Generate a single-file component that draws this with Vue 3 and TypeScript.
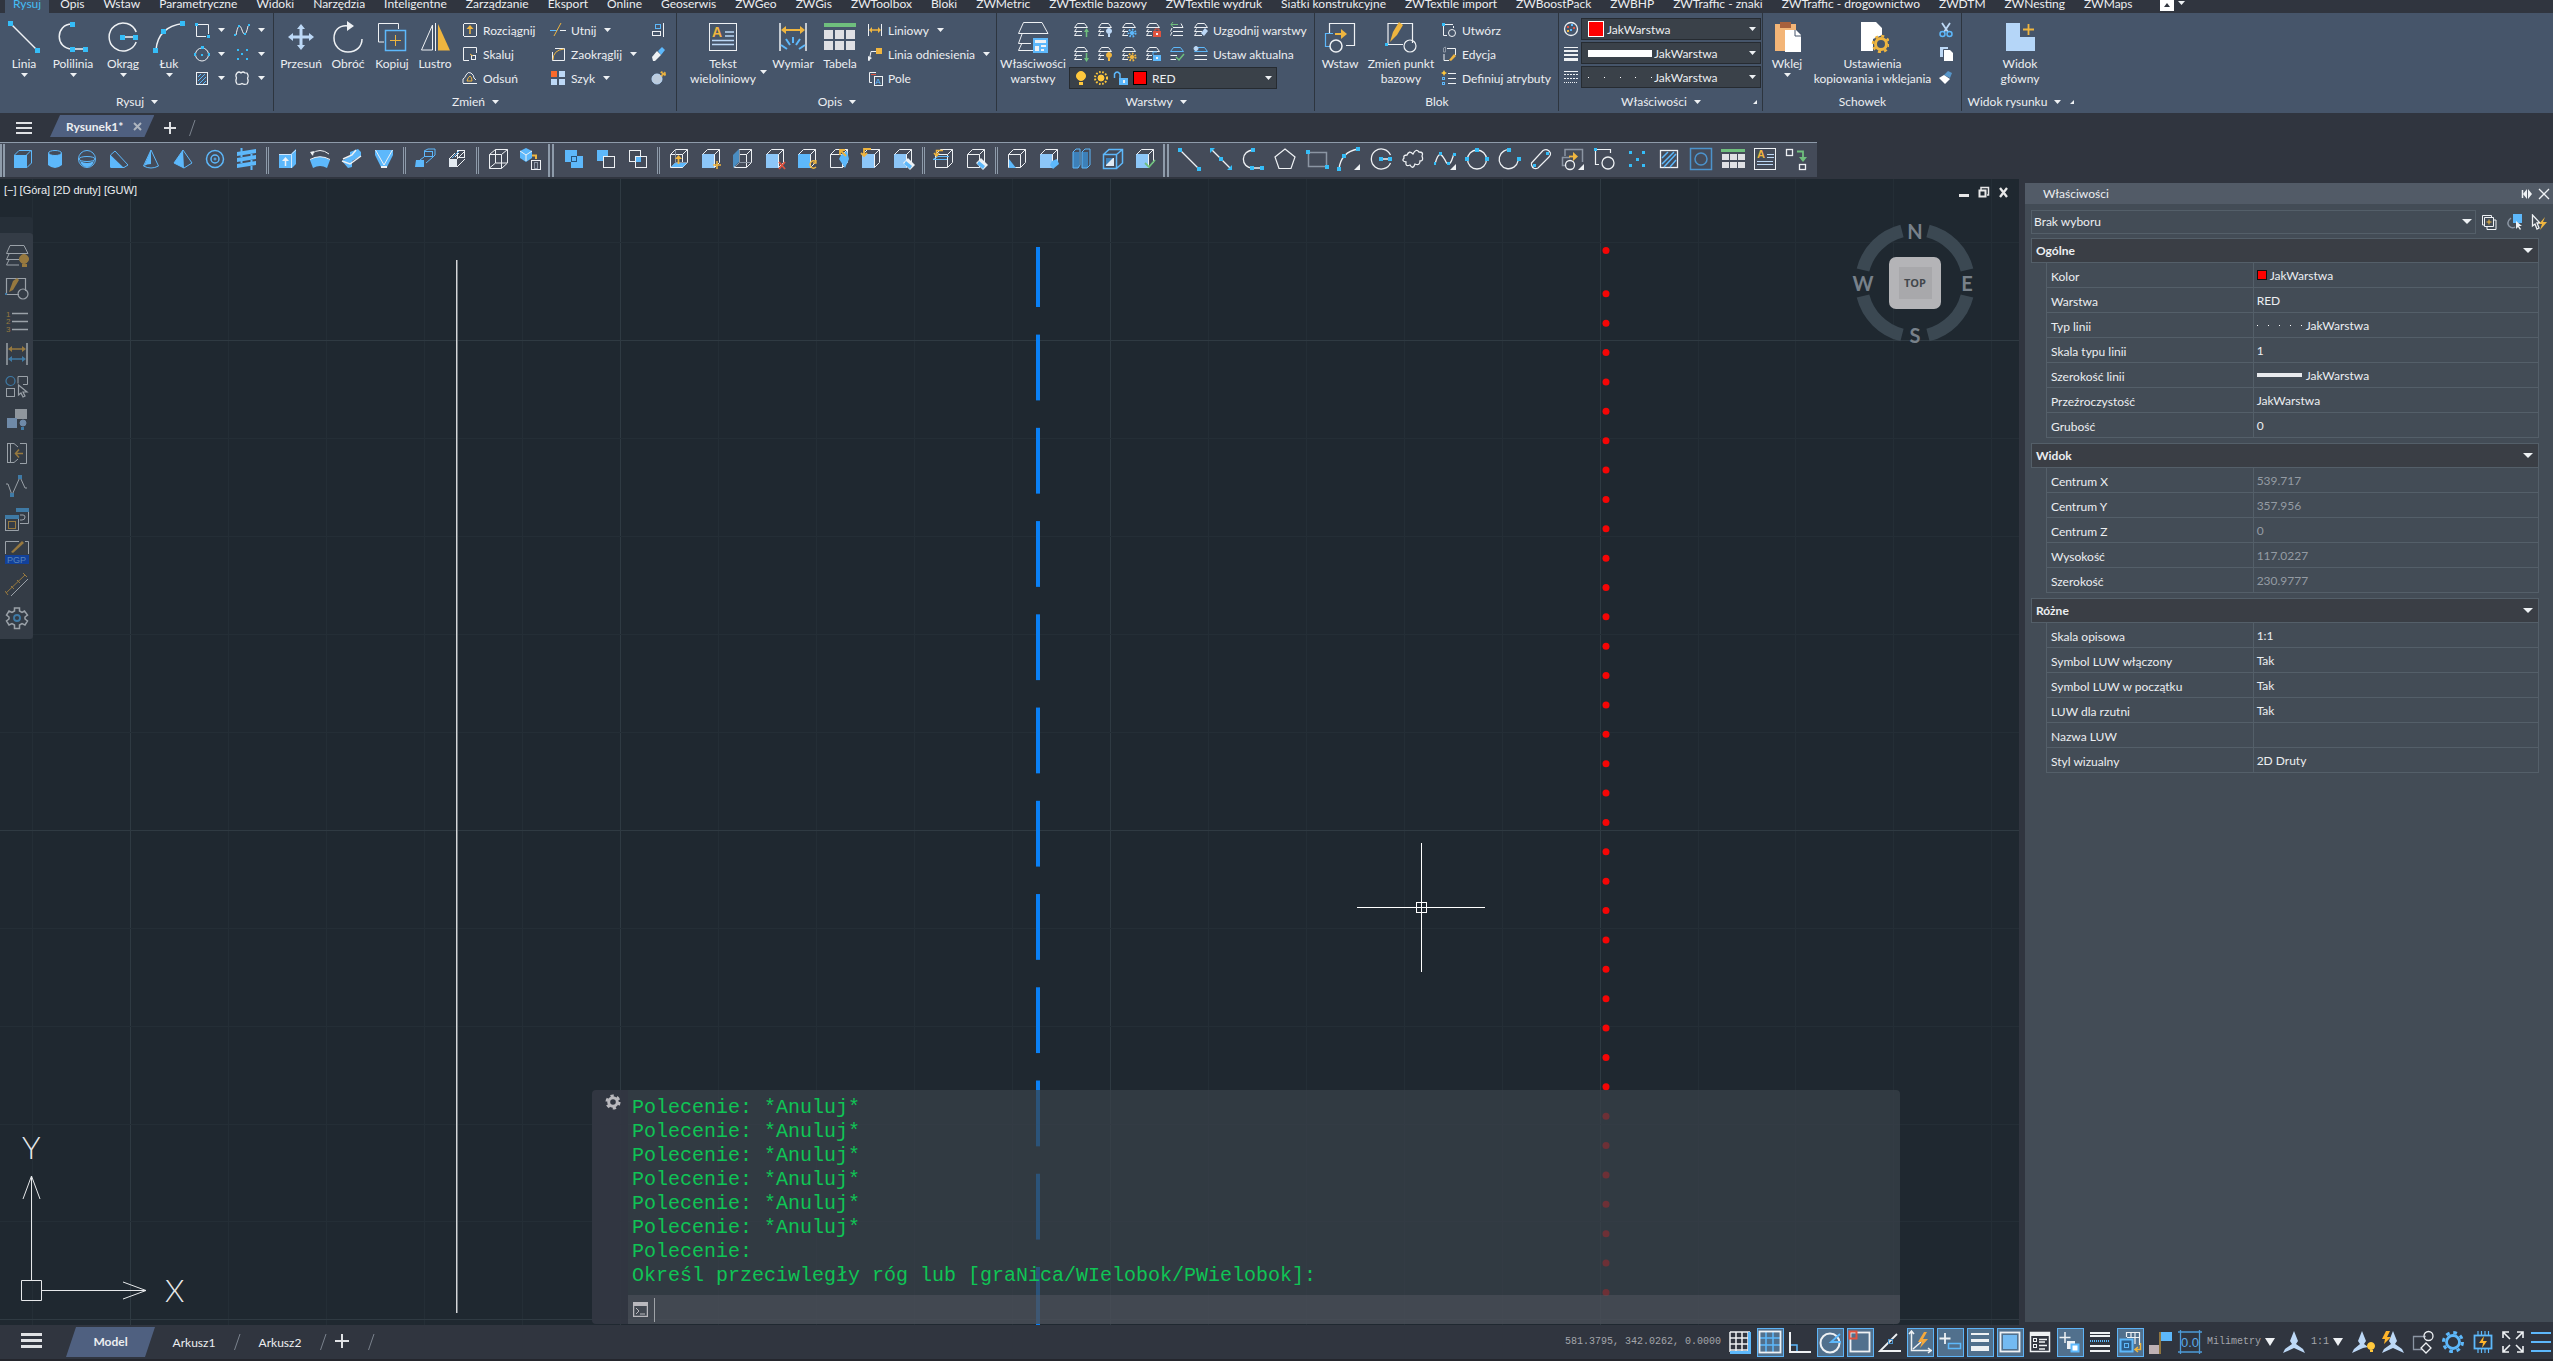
<script setup lang="ts">
import { h } from 'vue'

const W = '#eef1f4'
const B = '#5db8fb'
const C = '#35bdf8'
const Y = '#efb53f'
const L = '#bcd8f6'
const G = '#8b95a3'
const R = '#e0533f'
const N = '#6fbf7d'
const S = '#9aa1a8'
const O = '#97793f'
const D = '#3f7aa5'

const p = (d: string, c = W, w = 1, f = 'none') =>
  `<path d="${d}" stroke="${c}" stroke-width="${w}" fill="${f}"/>`
const f = (d: string, c = W) => `<path d="${d}" fill="${c}"/>`
const r = (x: number, y: number, w: number, hh: number, c = C) =>
  `<rect x="${x}" y="${y}" width="${w}" height="${hh}" fill="${c}"/>`
const o = (x: number, y: number, w: number, hh: number, c = W, s = 1, fill = 'none') =>
  `<rect x="${x + 0.5}" y="${y + 0.5}" width="${w - 1}" height="${hh - 1}" stroke="${c}" stroke-width="${s}" fill="${fill}"/>`
const c = (x: number, y: number, q: number, s = W, w = 1, fill = 'none') =>
  `<circle cx="${x}" cy="${y}" r="${q}" stroke="${s}" stroke-width="${w}" fill="${fill}"/>`
const t = (x: number, y: number, z: number, s: string, col: string, wt = 400) =>
  `<text x="${x}" y="${y}" font-size="${z}" font-weight="${wt}" font-family="Liberation Sans, sans-serif" fill="${col}">${s}</text>`

const bulb = (x: number, y: number, col: string) =>
  c(x, y, 2.5, col, 1, col) + r(x - 1, y + 3, 2, 3, col)
const sun = (x: number, y: number, q: number, col: string) =>
  c(x, y, q * 0.5, col, 1, col) + `<circle cx="${x}" cy="${y}" r="${q}" stroke="${col}" stroke-width="2" fill="none" stroke-dasharray="1.6 1.6"/>`
const stack = (col = W) => p('M4.5 1.5 H11.5 L14.5 5.5 H1.5 Z M3.5 6.5 L1.5 9.5 H9 M3.5 10.5 L1.5 13.5 H9', col)
const cap = p('M1.5 5.5 L4.5 1.5 H11.5 L14.5 5.5 Z M3.5 7 L1.5 9.5 H7 M3.5 10.5 L1.5 13.5 H7')
const wire = (x = 0, y = 0) =>
  p(`M${3.5 + x} ${7.5 + y} H${15.5 + x} V${20.5 + y} H${3.5 + x} Z M${3.5 + x} ${7.5 + y} L${8.5 + x} ${2.5 + y} H${20.5 + x} V${15.5 + y} L${15.5 + x} ${20.5 + y} M${15.5 + x} ${7.5 + y} L${20.5 + x} ${2.5 + y}`)
const inner = p('M8.5 3 V15.5 H20 M8.5 15.5 L4 20', G)
const solid = (col = '#8cc6f8') => r(3, 7, 13, 14, col) + p('M3.5 7.5 L8.5 2.5 H20.5 V15.5 L15.5 20.5 M15.5 7.5 L20.5 2.5 M15.5 7.5 V20')
const diamond = f('M17 11 L24 18 L19 23 L12 16 Z', W) + f('M15 14 L21 19 L19 22 L13 17 Z', B)

const icons: Record<string, string> = {
  slash: p('M1.5 17 L7 1', '#7a828d'),
  menu: r(0, 1, 16, 2, '#e0e2e5') + r(0, 6, 16, 2, '#e0e2e5') + r(0, 11, 16, 2, '#e0e2e5'),
  plus: p('M6 0 V12 M0 6 H12', '#e0e2e5', 2),
  down: f('M0 0 H7 L3.5 4 Z'),
  wide: f('M0 0 H10 L5 5 Z'),
  tall: f('M0 0 H10 L5 8 Z'),
  corner: f('M0 4 L4 0 V4 Z'),
  close: p('M1 1 L8 8 M8 1 L1 8', '#aeb5bf', 2),
  // large ribbon
  line: p('M2 2 L29 29', W, 1.5) + r(0, 0, 5, 5) + r(27, 27, 5, 5),
  pline: p('M15 3 C-2 3 -2 28 15 28 H28', W, 1.5) + r(13, 1, 5, 5) + r(13, 26, 5, 5) + r(26, 26, 5, 5),
  circle: p('M29.2 11 A14 14 0 1 0 29.2 21 M16 16 H28', W, 1.5) + r(13, 14, 5, 5) + r(26, 14, 5, 5),
  arc: p('M3 29 C4 16 11 5 30 2.5', W, 1.5) + r(0, 27, 5, 5) + r(8, 8, 5, 5) + r(27, 0, 5, 5),
  move: f('M16 3 L20 8 H17.5 V14.5 H24 V12 L29 16 L24 20 V17.5 H17.5 V24 H20 L16 29 L12 24 H14.5 V17.5 H8 V20 L3 16 L8 12 V14.5 H14.5 V8 H12 Z', L),
  rotate: p('M17 5 C6 3 2 11 2 17 C2 25 8 31 16 31 C25 31 30 25 30 18', W, 1.5) + f('M15 0 L22 5 L15 10 Z'),
  copy: p('M8 21 H2.5 V2.5 H22.5 V8', W) + o(9, 9, 21, 21, B, 1.5) + p('M19.5 14 V25 M14 19.5 H25', Y),
  mirror: p('M13.5 4 V29 H2.5 Z', W) + p('M16.5 2 V30', W) + f('M19 3 L31 29.5 H19 Z', Y),
  mtext: o(2, 2, 28, 28) + t(5, 16, 14, 'A', Y, 700) + p('M18 11 H27 M18 15 H27 M5 19.5 H27 M5 23.5 H27', L, 1.5),
  dim: p('M3 2 V30 M29 2 V30', W, 1.5) + p('M6 9 H26', Y, 2) + f('M4 9 L9 5 V13 Z M28 9 L23 5 V13 Z', Y) + p('M16 16 V22 M9 18 L13 24 M23 18 L19 24 M4 24 L10 28 M28 24 L22 28', B, 2),
  table: r(0, 2, 32, 4, N) + [0, 1, 2].map(i => r(i * 11, 9, 9, 9, '#dfe0e4') + r(i * 11, 20, 9, 9, '#dfe0e4')).join(''),
  layers: p('M6.5 1.5 H25 L31 12.5 H1.5 Z M5 13 L1.5 22.5 H14 M5 22 L1.5 29.5 H16', W) + r(16, 17, 15, 15, B) + r(18, 19, 11, 3, W) + r(18, 25, 4, 5, W) + r(24, 24, 5, 2, W) + r(24, 28, 3, 2, W),
  insert: p('M5.5 12 V2.5 H30.5 V24.5 H22', W, 1.2) + p('M9 12.5 H1.5 V25.5 H6', B, 1.2) + p('M11 13 H20', Y, 2) + f('M17 8 L23 13 L17 18 Z', Y) + c(12, 25, 6, W, 1.5),
  basept: p('M3 23 V2.5 H27.5 V22 M3 23.5 H18', W, 1.2) + f('M5 21 L8 11 L14 1 L18 4 L12 14 Z', Y) + c(25, 25, 6, W, 1.2) + r(0, 22, 3, 3, C),
  paste: r(4, 3, 21, 27, '#f3b577') + r(9, 1, 11, 6, '#a8603c') + f('M14 9 H25 L30 14 V31 H14 Z', '#fff') + p('M24 9 V15 H30', '#46556a'),
  pasteset: f('M4 1 H19 L25 7 V14 L16 18 V30 H4 Z', '#fff') + c(24, 23, 5.5, Y, 3) + `<circle cx="24" cy="23" r="8" stroke="${Y}" stroke-width="2.5" fill="none" stroke-dasharray="3 3.28"/>`,
  mainview: f('M2 2 H16 V16 H31 V30 H2 Z', '#b5d6f8') + p('M24.5 3 V14 M19 8.5 H30', Y, 1.8),
  // small ribbon
  rect: p('M4 2.5 H14.5 V12 M2.5 4 V14.5 H12', W) + r(1, 1, 3, 3) + r(13, 13, 3, 3),
  spl: p('M2 13 C4 2 6 2 8 8 C10 14 12 14 14 4', W) + r(0, 12, 2, 2) + r(4, 3, 2, 2) + r(10, 11, 2, 2) + r(14, 2, 2, 2),
  circ2: c(8, 8.5, 6.5, W) + r(7, 0, 3, 3) + r(7, 8, 2, 2) + r(0, 7, 2, 3) + r(14, 7, 2, 3),
  dots: [[3, 3], [12, 3], [7, 7], [3, 12], [12, 12]].map(q => r(q[0], q[1], 2, 2)).join(''),
  hatch: o(2, 2, 12, 13, W) + p('M4 7 L7 4 M4 11 L11 4 M5 14 L12 7 M9 14 L12 11', B),
  revc: p('M3 3 Q5 1 7 3 Q9 1 11 3 L13 3 Q15 6 13.500 8 Q15 11 13 14 Q10 15 8 13.500 Q6 15 3 14 Q1 11 2.500 8 Q1 5 3 3', W, 1.2),
  stretch: p('M2 1.500 H14 M2 14.500 H14', W) + p('M1.500 2 V14 M14.500 2 V14', W) + p('M8 5 V12', Y, 1.5) + f('M4.500 7 L8 3 L11.500 7 Z', Y),
  scale: p('M1.500 1.500 H14.500 V7 M1.500 1.500 V14.500 H7', W) + o(9, 9, 5, 5, W) + p('M8 8 L11 10', Y),
  offset: p('M1 13.500 H15 M1 13 V9 Q3 8 4 5 Q6 1 9 3 Q12 5 12 8 L14 10', W) + p('M5 11 Q6 7 8 6 Q10 7 10 11 Z', Y),
  trim: p('M0 8.500 H7', B) + p('M10 8.500 H16', W) + p('M4 14 L11 1', Y),
  fillet: p('M5 2.500 H14.500 V14.500 H2.500 V6', W) + p('M3 14 Q3 4 14 3', Y),
  array: r(1, 1, 6, 6, '#fa6a2b') + r(9, 1, 6, 6, L) + r(1, 9, 6, 6, L) + r(9, 9, 6, 6, L),
  align: p('M13.500 1 V15', W) + o(5, 2, 6, 5, B) + o(2, 9, 9, 5, W),
  erase: f('M8 5 L12 1 L15 4 L11 9 Z', B) + f('M2 11 L7 5 L11 9 L5 15 H3 Z', W),
  explode: c(7, 9, 5, L, 1, '#bccbdc') + sun(13, 4, 2, Y),
  dimlin: p('M1.500 2 V14 M14.500 2 V14', W) + p('M3 8 H13', Y, 1.5) + f('M2 8 L5 5 V11 Z M14 8 L11 5 V11 Z', Y),
  leader: p('M2 15 L4 5.500 H9', W) + f('M1 15 L1 10 L5 12 Z') + r(9, 2, 6, 6, Y),
  field: p('M9 2.500 H2.500 V12.500 H5', W) + p('M4 4.500 H9', R) + o(7, 6, 9, 10, W) + t(8.5, 14, 8, 'A', B),
  lyUp: stack() + p('M13.500 8 V15', N, 1.5) + f('M11 10 L13.500 6 L16 10 Z', N),
  lyDn: stack() + p('M13.500 7 V14', N, 1.5) + f('M11 12 L13.500 16 L16 12 Z', N),
  lyOff: cap + bulb(12, 9, L),
  lyOn: cap + bulb(12, 9, Y),
  lyFrz: cap + sun(11, 11, 3.5, B),
  lyThw: cap + sun(11, 11, 3.5, Y),
  lyLock: cap + r(8, 9, 8, 6, R) + p('M10 9 V7 H14 V9', R) + r(11, 11, 2, 2, W),
  lyUnl: cap + r(8, 9, 8, 6, B) + p('M8 9 V6 H12', B) + r(11, 11, 2, 2, W),
  lyPrev: p('M4 5.500 H14 L12 1.500 M4 9.500 H14 M4 13.500 H14 M3 6 L1.500 9.500 M3 10 L1.500 13.500', W) + p('M2 2.500 H9 M4 0 L2 2.500 L4 5', N),
  lyCur: p('M1.500 5.500 L4.500 1.500 H11.500 L14.500 5.500 Z', B) + p('M1.500 9.500 H8 M1.500 13.500 H7', W) + p('M7 11 L10 14 L15 8', N, 1.5),
  lyMat: stack() + f('M12 6 L15 9 L11 14 L8 11 Z', L),
  lySet: p('M1.500 5.500 L4.500 1.500 H11.500 L14.500 5.500 Z', B) + p('M1.500 9.500 H14 M1.500 13.500 H14', W) + c(3, 2.5, 2, L, 1, L),
  bulbY: c(8, 6, 4.5, '#ffc83d', 1, '#ffc83d') + r(6, 12, 4, 3, '#ffc83d'),
  sunY: sun(8, 8, 6, '#ffc83d'),
  unlock: r(6, 8, 9, 7, B) + p('M7 8 V4 Q4 0 1.500 4 V8', B, 1.5) + r(10, 10, 2, 3, W),
  mk: p('M4 2.500 H12 M2.500 4 V13.500 H6 M12.500 4 V6', W) + r(1, 1, 3, 3) + c(11, 11, 3.5),
  edit: p('M6 2.500 H14.500 V9 M3 8 V14.500 H8', W) + p('M2.500 2 V6 H4.500 V1 Z', G) + f('M8 14 L13 8 L15 10 L10 15 Z', Y),
  attr: p('M7 3.500 H15 M7 8.500 H15 M7 13.500 H15', W) + o(1, 7, 3, 3, B) + o(1, 12, 3, 3, B) + f('M3 0 L4 2 L6 3 L4 4 L3 6 L2 4 L0 3 L2 2 Z', '#ffc83d'),
  palette: c(8, 8, 6.5, W, 1.3) + r(4, 5, 2, 2, R) + r(8, 3, 2, 2, B) + r(10, 6, 2, 2, R) + r(7, 8, 2, 2, B) + r(4, 9, 2, 2, Y),
  weight: r(1, 2, 14, 1, W) + r(1, 5, 14, 2, W) + r(1, 9, 14, 2, W) + r(1, 13, 14, 3, W),
  ltype: p('M1 2.500 H15', W) + `<path d="M1 5.500 H15 M1 9.500 H15" stroke="${W}" stroke-dasharray="2 1"/><path d="M1 13.500 H15" stroke="${W}" stroke-dasharray="1 1"/>`,
  cut: p('M4 1 L10 10 M12 1 L6 10', L, 1.8) + c(4.5, 12, 2.5, B, 1.5) + c(11.5, 12, 2.5, B, 1.5),
  copyc: r(2, 1, 8, 10, L) + f('M6 4 H12 L15 7 V15 H6 Z', '#fff') + p('M5.500 12 V3.500 H11', '#46556a'),
  match: f('M6 5 L10 1 L14 3 L12 8 Z', '#5796c9') + f('M1 8 L6 5 L12 9 L7 14 Z', '#fff'),
  // 3D toolbar
  box: r(3, 8, 13, 13, B) + p('M3.500 8 L8 3.500 H20.500 V16 L16 20.500 M15.500 8 L20 3.500', B),
  cyl: f('M5 6 V18 Q12 24 19 18 V6 Z', B) + `<ellipse cx="12" cy="6" rx="6.500" ry="2.500" fill="#444b59" stroke="${B}"/>`,
  sph: c(12, 12, 8.5, B) + `<ellipse cx="12" cy="12" rx="8" ry="2.500" stroke="${B}" fill="none"/>` + f('M5 14 Q12 18 19 14 Q17 20 12 20 Q7 20 5 14 Z', B),
  wedge: p('M3.500 20 V8 L8 4 L21 18 L17 20.500 Z', B) + f('M3.500 8 L17 21 H3.500 Z', B),
  cone: p('M12 3 L4.500 19 Q12 23 19.500 19 Z', B) + f('M12 3 L5 19 Q8 17 12 17 Z', B),
  pyr: p('M12 3 L3 16 L13 21 L21 16 Z', B) + f('M12 3 L3 16 L13 21 Z', B),
  torus: c(12, 12, 8.5, B, 1.5) + c(12, 12, 4, B, 1.5) + c(12, 12, 1, B),
  helix: [2, 8, 14].map(q => f(`M2 ${q + 3} L21 ${q} V${q + 4} L2 ${q + 7} Z`, B)).join('') + p('M6.500 1 V5 M6.500 8 V10 M6.500 14 V16 M16.500 7 V9 M16.500 13 V15 M16.500 19 V23', B, 2),
  extr: f('M3 7 H15 L20 2 V17 L16 21 H3 Z', B) + p('M3 7.500 H15.500 V21 M15.500 7 L20 3', '#cfe6fb') + p('M9.500 12 V19', W, 1.5) + f('M6 14 L9.500 10 L13 14 Z'),
  revo: p('M3 7 Q12 0 21 7', W) + f('M2 5 L6 4 L5 9 Z') + f('M2 13 Q12 6 22 13 L19 21 Q12 17 5 21 Z', B) + p('M2 12.500 Q12 7 22 12.500', W),
  sweep: f('M2 14 L10 9 V5 L18 2 L21 5 V9 L12 14 V20 L8 21 Z', B) + p('M2 14 L10 17 L21 9 M3 12 L12 8 L16 3', W, 1.5),
  loft: f('M3 3 H21 V8 L15 20 H9 L3 8 Z', B) + p('M3.500 3 L12 18 L20.500 3', W) + p('M9 20 H15', W, 2),
  pol1: o(11, 4, 9, 6, B) + f('M3 13 H11 V20 H2 Z', B) + p('M11 10 L7 13 M20 10 L13 16 M11 4 L15 2 H22 V8 L20 10', B),
  pol2: o(12, 3, 8, 8, W) + r(4, 12, 8, 8, '#e4ebf2') + p('M4 12 L10 6 M12 12 L20 4 M12 20 L20 12 M10 10 L14 6', W) + p('M7 11 L14 4', B),
  cube: p('M3.500 7.500 H15.500 V21.500 H3.500 Z M3.500 7.500 L9.500 2.500 H21.500 V16 L15.500 21.500 M15.500 7.500 L21.500 2.500 M9.500 2.500 V16 M9.500 16 H21 M9.500 16 L3.500 21', W),
  cyl2: f('M2 4 L8 1 L14 4 V11 L8 15 L2 11 Z', B) + p('M8 8 V14 M2 4 L8 8 L14 4', W) + p('M14 8.500 H18 V12', Y, 2) + o(13, 13, 10, 10, W) + o(16, 15, 4, 7, G),
  uni: r(3, 3, 12, 12, B) + r(9, 9, 12, 12, B) + o(9, 9, 6, 6, '#27547c'),
  sub: r(3, 3, 11, 11, B) + o(9, 9, 12, 12, W, 1, '#444b59'),
  inter: o(3, 3, 12, 12) + o(9, 9, 12, 12) + r(10, 10, 5, 5, B),
  f1: wire() + inner + f('M4 20 L8 16 H20 L16 20 Z', B) + p('M11.500 10 V17', Y, 1.8) + f('M8 12 L11.500 8 L15 12 Z', Y),
  f2: solid() + p('M18 14 V22 M14 18 H22', Y, 1.5),
  f3: wire() + inner + f('M2 8 L8 2 V15 L2 21 Z', '#4a8dc2'),
  f4: solid() + p('M16 15 L22 22 M22 15 L16 22', R, 1.8),
  f5: solid(B) + p('M21 15 A3.500 3.500 0 1 0 21 20 M21 13 V16 H18', Y, 1.3),
  f6: wire() + f('M14 8 L20 4 L22 12 L18 21 L12 12 Z', B) + p('M13 3 L19 9 M13 8 V3 H18', Y, 1.8),
  f7: solid() + p('M12 2 H5 V8 M2 6 L5 9 L8 6', Y, 1.8),
  f8: solid() + diamond,
  s1: wire() + p('M1 12.500 H15 M1 12.500 L6 9.500 H17', B) + p('M11 3.500 H4.500 V8 M2 6 L4.500 9 L7 6', Y, 1.5),
  s2: wire() + diamond,
  b1: wire() + f('M4 12 L11 21 H4 Z', B),
  b2: solid() + f('M15 14 L20 12 L22 17 L16 22 L13 18 Z', B),
  b3: f('M4 5 H10 V21 H4 Z M13 5 H19 V21 H13 Z', '#3d80b8') + p('M4 5 L7 2 H11 V18 L9 21 H4 Z M13 5 L16 2 H21 V18 L18 21 H13 Z', B),
  b4: p('M2.500 7.500 H15.500 V21.500 H2.500 Z M2.500 7.500 L8 2.500 H21.500 V16 L15.500 21.500 M15.500 7.500 L21.500 2.500', B, 1.5) + r(5, 11, 8, 8, '#dfeaf4') + f('M5 11 H12 L5 18 Z', '#3d80b8'),
  b5: solid() + p('M12 16 L16 20 L22 13', N, 1.8),
  // draw toolbar
  dLine: p('M3 3 L21 21', W, 1.3) + r(1, 1, 4, 4) + r(20, 20, 4, 4),
  dXline: p('M3 3 L21 21', W, 1.3) + r(10, 10, 4, 4) + f('M1 1 H6 L1 6 Z M23 23 H18 L23 18 Z', C),
  dPline: p('M13 3 C-1 3 -1 21 12 21 H21', W, 1.3) + r(10, 1, 4, 4) + r(9, 19, 4, 4) + r(19, 19, 4, 4),
  dPoly: p('M12 2 L22 10 L18 21.500 H6 L2 10 Z', W, 1.2),
  dRect: p('M3 5.500 H21.500 V19 M3.500 5 V19.500 H20', G, 1.5) + r(1, 3, 4, 4) + r(20, 18, 4, 4),
  dArc: p('M2 22 Q4 5 21 2', W, 1.3) + r(0, 20, 4, 4) + r(5, 7, 4, 4) + r(19, 0, 4, 4) + f('M23 17 V23 H17 Z'),
  dCirc: p('M21.500 8 A10 10 0 1 0 21.500 16 M12 12 H20', W, 1.3) + r(10, 10, 4, 4) + r(19, 10, 4, 4),
  dCloud: p('M6 8 Q8 3 12 7 Q15 1 18 5 Q23 5 21 9 Q23 14 19 14 Q19 19 14 17 Q12 23 9 18 Q4 20 5 15 Q0 14 3 11 Q2 8 6 8 Z', W, 1.3),
  dSpl: p('M2 17 C6 2 9 8 12 13 C15 20 18 18 21 6', W, 1.3) + r(1, 15, 2, 3) + r(6, 5, 3, 3) + r(14, 15, 3, 3) + r(20, 6, 3, 3) + f('M23 17 V23 H17 Z'),
  dEll: c(12, 12.5, 9.5, W, 1.3) + r(10, 1, 4, 4) + r(0, 10, 4, 4) + r(20, 10, 4, 4),
  dEllA: p('M14 3 A9.500 9.500 0 1 0 21 14', W, 1.3) + r(10, 1, 4, 4) + r(20, 10, 4, 4),
  dCaps: p('M2.500 16 L14 3.500 Q19 1 21.500 6 Q22 8 20 10 L9 21 Q4 23 2.500 18 Z', W, 1.2) + r(4, 17, 3, 3) + r(17, 5, 3, 3),
  dIns: p('M4 9 V2.500 H21.500 V15 M9 10.500 H1.500 V18.500 H4', G, 1.5) + p('M8 9.500 H15', Y, 1.8) + f('M12 5 L17 9.500 L12 14 Z', Y) + c(9, 18, 4.5, W, 1.3) + f('M23 17 V23 H17 Z'),
  dMk: p('M4 2.500 H17.500 V6 M2.500 4 V17.500 H6', W, 1.2) + r(1, 1, 3, 3) + c(15, 16, 6, W, 1.3),
  dDots: [[4, 4], [17, 4], [11, 11], [4, 17], [17, 17]].map(q => r(q[0], q[1], 3, 3)).join(''),
  dHat: o(3, 3, 18, 18, W, 1.3) + p('M5 11 L11 5 M5 17 L17 5 M7 20 L19 7 M13 20 L19 13', B, 1.5),
  dReg: o(1, 1, 22, 22, '#4c93cc', 1.5) + c(12, 12, 6, '#4c93cc', 1.5),
  dTab: r(0, 2, 24, 3, N) + [0, 1, 2].map(i => r(i * 8 + 1, 7, 7, 6, '#dfe0e4') + r(i * 8 + 1, 15, 7, 6, '#dfe0e4')).join(''),
  dTxt: o(1, 1, 22, 22, W) + t(4, 11, 11, 'A', Y, 700) + p('M14 7.500 H21 M14 10.500 H21 M4 14.500 H20 M4 17.500 H20', L, 1.2),
  dOrd: o(1, 2, 7, 7, W, 1.3) + o(14, 17, 7, 6, W, 1.3) + p('M12 4.500 H18 V12', N, 1.8) + f('M14 10 H22 L18 15 Z', N),
  // floating side toolbar
  q1: p('M5 2.500 H19 L23 10.500 H1.500 Z M4 11 L1.500 16.500 H14 M4 17 L1.500 22 H14', S) + c(19, 16, 4.5, O, 1, O) + r(17, 21, 5, 3, O),
  q2: p('M1.500 18 V2.500 H20.500 V15 M2 18.500 H14', S, 1.2) + f('M4 16 L8 5 L12 2 L14 4 L8 14 Z', O) + c(18, 18, 5, S, 1.2) + r(0, 17, 2, 2, D),
  q3: t(1, 8, 8, '1', O) + t(1, 15, 8, '2', O) + t(1, 23, 8, '3', O) + p('M7 4.500 H23 M7 12.500 H23 M7 20.500 H23', S, 1.3),
  q4: p('M2 1 V23 M22 1 V23', S, 1.5) + p('M5 7 H19', O, 1.5) + f('M3 7 L7 4 V10 Z M21 7 L17 4 V10 Z', O) + p('M5 17 H19', D, 1.5) + f('M3 17 L7 14 V20 Z M21 17 L17 14 V20 Z', D),
  q5: c(5.5, 6, 4.5, D, 1.2) + p('M13 8.500 V1.500 H22.500 V9.500 H18', S) + o(1, 13, 9, 9, S) + p('M13.500 10 V20 L16 18 L18 22 L20 21 L18 17 L22 17 Z', S, 1.2),
  q6: r(10, 1, 12, 10, '#8f969d') + r(2, 10, 10, 10, '#6f8aa8') + c(18, 15, 3, '#6f8aa8', 1, '#6f8aa8') + r(16, 19, 3, 3, D),
  q7: p('M2.500 2 V22 M5.500 2 V22 M2 2.500 H9 L13 6 M2 21.500 H9 L13 18 M15 2.500 H21.500 V22.500 H15', S) + p('M11 12.500 H18 M14 8.500 L10.500 12.500 L14 16.500', O, 1.5),
  q8: p('M1 10 L3 10 L7 21 L15 3 L20 14 H22', S) + r(5, 19, 4, 4, D) + r(13, 1, 4, 4, D),
  q9: r(11, 1, 13, 4, D) + p('M23.500 5 V16.500 H15', S) + r(0, 8, 14, 4, D) + p('M0.500 12 V24 M0 23.500 H13.500 V12', S) + o(3, 14, 8, 8, O) + p('M15 8 H18 Q20 8 20 10 Q20 13 17 13 H15', S),
  q10: p('M0.500 14 V1.500 H14 M20 1.500 H23.500 V14', S) + f('M6 12 L17 1 L19 3 L8 13 Z', O) + r(0, 15, 24, 9, '#12419a') + t(2, 23, 9, 'PGP', '#5b86b8'),
  q11: p('M1 20 L20 2 M0 18 L3 22 M18 0 L22 4 M6 13 L9 16 M12 7 L15 10', O) + p('M6 23 L23 6', S),
  q12: p('M9.500 2 H14.500 V5 L17 6.500 L19.500 5 L22.500 9 L20 11 V13 L22.500 15 L20 19 L17 17.500 L14.500 19 V22.500 H9.500 V19 L7 17.500 L4 19 L1.500 15 L4 13 V11 L1.500 9 L4 5 L7 6.500 L9.500 5 Z', S, 1.5) + c(12, 12, 3, D, 1.8),
  // status bar
  t1: [2, 8, 14, 20].map(q => p(`M${q} 2 V22 M2 ${q} H22`, W, 1.5)).join('') + p('M21.500 2 V22.500 H2', B, 3),
  t2: p('M8 2 V22 M15 2 V22 M2 8 H22 M2 15 H22', B, 1.5) + o(1, 1, 22, 22, W, 1.8),
  t3: p('M2 2 V22 H23', W, 2) + p('M3 15 H9 V21', B, 1.5),
  t4: c(12, 13, 9.5, W, 2) + p('M22 4 L13 12 H23', B, 1.8),
  t5: o(2, 2, 20, 20, W, 1.8) + o(1, 1, 8, 8, R, 2),
  t6: p('M23 21 H2 L19 4', W, 1.8) + o(10, 9, 5, 5, '#4c93cc'),
  t7: p('M3.500 1 V20.500 H24 M1 4 L3.500 1 L6 4 M20 18 L23 20.500 L20 23 M5 19 L13 12', W, 1.5) + f('M16 2 L10 12 H14 L12 18 L20 9 H15 L19 2 Z', '#f4a83d'),
  t8: p('M7 3 V14 M1.500 8.500 H12.500', W, 1.8) + o(10, 13, 13, 6, B, 1.5),
  t9: r(3, 3, 18, 2, W) + r(3, 9, 18, 3, W) + r(3, 16, 18, 5, W),
  t10: o(2, 2, 20, 20, W, 1.8) + r(5, 5, 14, 14, '#73baf2'),
  t11: o(2, 2, 20, 20, W, 1.5) + r(2, 2, 20, 4, W) + o(5, 8, 4, 4, W) + o(5, 14, 4, 4, W) + p('M11 9.500 H19 M11 12 H17 M11 15.500 H19 M11 19 H17', W, 1.3),
  t12: p('M7 2 V13 M1.500 7.500 H12.500', W, 1.5) + r(9, 11, 8, 8, W) + o(13, 14, 8, 8, B, 2, '#fff'),
  t13: [2, 5, 15, 20].map(q => r(2, q, 20, 2, W)).join('') + `<path d="M2 11 H22" stroke="${B}" stroke-width="2" stroke-dasharray="1 1"/>`,
  t14: p('M8.500 7 V2.500 H21.500 V15 M13 2 V8 M17 2 V14 M9 7.500 H21', W, 1.2) + o(2, 9, 13, 13, B, 2, '#2c5d8a') + o(6, 13, 5, 5, B) + p('M22.500 13 V19.500 H18 M20 17 L17 19.500 L20 22', Y, 1.5),
  t15: r(13, 2, 11, 9, B) + p('M12 2 V24', Y, 1) + r(1, 15, 10, 9, '#bfb2b5'),
  t16: p('M2.500 0 V24 M21.500 0 V24 M0 2 H24 M0 22 H24', '#4c9ad8', 1.3) + t(3, 17, 13, '0.0', '#58a9ea'),
  t17: f('M12 1 L16 11 L14 14 L21 19 L23 23 L12 18 L1 23 L3 19 L10 14 L8 11 Z', L),
  t18: f('M11 1 L15 11 L13 14 L17 17 L12 18 L1 23 L3 19 L9 14 L7 11 Z', L) + c(20, 16, 3.5, '#ffc83d', 1, '#ffc83d') + r(19, 20, 3, 2, '#ffc83d'),
  t19: f('M12 1 L16 11 L14 14 L21 19 L23 23 L12 18 L1 23 L3 19 L10 14 L8 11 Z', L) + f('M5 1 L1 9 H4 L3 14 L10 7 H6 L9 1 Z', '#ffb52b'),
  t20: p('M15 6.500 H2.500 V19.500 H11', G, 1.3) + c(17.5, 6, 4.5, W, 1.3) + p('M15 13 L20 18 L15 23 L10 18 Z', W, 1.3),
  t21: c(12, 12, 6.5, B, 2.8) + `<circle cx="12" cy="12" r="9.500" stroke="${B}" stroke-width="3" fill="none" stroke-dasharray="3.700 3.760"/>`,
  t22: o(3, 5, 18, 14, B, 1.8) + p('M7 1 V5 M10.500 1 V5 M14 1 V5 M17.500 1 V5 M7 19 V23 M10.500 19 V23 M14 19 V23 M17.500 19 V23', B, 1.2) + f('M13 6 L8 13 H12 L11 18 L16 11 H12 Z', '#ffb52b'),
  t23: p('M2 8 V2 H8 M16 2 H22 V8 M22 16 V22 H16 M8 22 H2 V16 M2 2 L9 9 M22 2 L15 9 M22 22 L15 15 M2 22 L9 15', W, 1.6),
  t24: r(2, 2, 20, 2, B) + r(2, 11, 20, 2, B) + r(2, 20, 20, 2, B),
  // palette window
  pin: p('M4.500 4 V12', W, 1.5) + f('M9 3 V13 L5 8 Z M10 3 V13 L14 8 Z'),
  x: p('M3 3 L13 13 M13 3 L3 13', W, 1.3),
  pk1: p('M3 11 H1.500 V1.500 H10.500 V3 M3.500 3.500 H12.500 V12.500 H3.500 Z M13 6 H15 V15.500 H6 V13', W) + p('M8 5.500 V10.500 M5.500 8 H10.500', Y),
  pk2: r(7, 0, 9, 9, B) + p('M5 4 Q0 8 3 12 Q6 15 9 13', G, 1.5) + f('M10 7 V15 L12 13 L14 16 L15 15 L13 12 H16 Z'),
  pk3: p('M1.500 1 V12 L4 10 L6 15 L8 14 L6 9 H9 Z', W, 1.3) + f('M14 3 L8 10 H11 L9 16 L16 8 H12 Z', Y),
  cmd: o(0, 0, 15, 15, '#b9b8bd', 1.5) + r(0, 0, 15, 4, '#b9b8bd') + p('M3 6 L6 9 L3 12 M7 12 H12', '#b9b8bd'),
  gear: c(8, 8, 4.3, '#b9b8bd', 3) + `<circle cx="8" cy="8" r="6.300" stroke="#b9b8bd" stroke-width="2.500" fill="none" stroke-dasharray="3.300 3.300"/>`,
  vmin: r(1, 8, 10, 3, '#e8e8e8'),
  vmax: p('M3 4 V1.500 H10.500 V9 H9', '#e8e8e8', 1.5) + o(1, 4, 7, 7, '#e8e8e8', 2),
  vclose: p('M2 2 L9 11 M9 2 L2 11', '#e8e8e8', 2.3),
}

const Icon = (a: { n: string; w: number; h?: number }) =>
  h('svg', {
    width: a.w,
    height: a.h ?? a.w,
    viewBox: `0 0 ${a.w} ${a.h ?? a.w}`,
    'aria-hidden': 'true',
    style: 'display:block;flex:none',
    innerHTML: icons[a.n],
  })

const tabs = ['Rysuj', 'Opis', 'Wstaw', 'Parametryczne', 'Widoki', 'Narzędzia', 'Inteligentne', 'Zarządzanie', 'Eksport', 'Online', 'Geoserwis', 'ZWGeo', 'ZWGis', 'ZWToolbox', 'Bloki', 'ZWMetric', 'ZWTextile bazowy', 'ZWTextile wydruk', 'Siatki konstrukcyjne', 'ZWTextile import', 'ZWBoostPack', 'ZWBHP', 'ZWTraffic - znaki', 'ZWTraffic - drogownictwo', 'ZWDTM', 'ZWNesting', 'ZWMaps']

interface Item { i: string; label?: string; drop?: boolean }
interface Block { kind: 'big' | 'col' | 'layers' | 'combos'; w: number; i?: string; lines?: string[]; drop?: boolean; side?: boolean; items?: Item[] }
interface Panel { title: string; w: number; pad: number; arrow?: boolean; corner?: boolean; blocks: Block[] }

const big = (w: number, i: string, lines: string[], drop = false, side = false): Block => ({ kind: 'big', w, i, lines, drop, side })
const col = (w: number, ...items: Item[]): Block => ({ kind: 'col', w, items })

const panels: Panel[] = [
  {
    title: 'Rysuj', w: 274, pad: 0, arrow: true,
    blocks: [
      big(48, 'line', ['Linia'], true), big(50, 'pline', ['Polilinia'], true), big(50, 'circle', ['Okrąg'], true), big(42, 'arc', ['Łuk'], true),
      col(40, { i: 'rect', drop: true }, { i: 'circ2', drop: true }, { i: 'hatch', drop: true }),
      col(40, { i: 'spl', drop: true }, { i: 'dots', drop: true }, { i: 'revc', drop: true }),
    ],
  },
  {
    title: 'Zmień', w: 403, pad: 4, arrow: true,
    blocks: [
      big(46, 'move', ['Przesuń']), big(48, 'rotate', ['Obróć']), big(40, 'copy', ['Kopiuj']), big(46, 'mirror', ['Lustro']),
      col(88, { i: 'stretch', label: 'Rozciągnij' }, { i: 'scale', label: 'Skaluj' }, { i: 'offset', label: 'Odsuń' }),
      col(100, { i: 'trim', label: 'Utnij', drop: true }, { i: 'fillet', label: 'Zaokrąglij', drop: true }, { i: 'array', label: 'Szyk', drop: true }),
      col(24, { i: 'align' }, { i: 'erase' }, { i: 'explode' }),
    ],
  },
  {
    title: 'Opis', w: 320, pad: 10, arrow: true,
    blocks: [
      big(82, 'mtext', ['Tekst', 'wieloliniowy'], false, true), big(48, 'dim', ['Wymiar']), big(46, 'table', ['Tabela']),
      col(128, { i: 'dimlin', label: 'Liniowy', drop: true }, { i: 'leader', label: 'Linia odniesienia', drop: true }, { i: 'field', label: 'Pole' }),
    ],
  },
  { title: 'Warstwy', w: 318, pad: 0, arrow: true, blocks: [big(72, 'layers', ['Właściwości', 'warstwy']), { kind: 'layers', w: 244 }] },
  {
    title: 'Blok', w: 244, pad: 0,
    blocks: [big(50, 'insert', ['Wstaw']), big(72, 'basept', ['Zmień punkt', 'bazowy']), col(120, { i: 'mk', label: 'Utwórz' }, { i: 'edit', label: 'Edycja' }, { i: 'attr', label: 'Definiuj atrybuty' })],
  },
  { title: 'Właściwości', w: 204, pad: 0, arrow: true, corner: true, blocks: [{ kind: 'combos', w: 202 }] },
  {
    title: 'Schowek', w: 199, pad: 0,
    blocks: [big(48, 'paste', ['Wklej'], true), big(123, 'pasteset', ['Ustawienia', 'kopiowania i wklejania']), col(24, { i: 'cut' }, { i: 'copyc' }, { i: 'match' })],
  },
  { title: 'Widok rysunku', w: 118, pad: 0, arrow: true, corner: true, blocks: [big(116, 'mainview', ['Widok', 'główny'])] },
]

const layerRows = [
  { label: 'Uzgodnij warstwy', ic: ['lyUp', 'lyOff', 'lyFrz', 'lyLock', 'lyPrev', 'lyMat'] },
  { label: 'Ustaw aktualna', ic: ['lyDn', 'lyOn', 'lyThw', 'lyUnl', 'lyCur', 'lySet'] },
]
const styleCombos = [
  { i: 'palette', kind: 'color', name: 'Kolor' },
  { i: 'weight', kind: 'weight', name: 'Szerokość linii' },
  { i: 'ltype', kind: 'dots', name: 'Typ linii' },
]

const tools = ('box cyl sph wedge cone pyr torus helix | extr revo sweep loft | pol1 pol2 | cube cyl2 # uni sub inter | f1 f2 f3 f4 f5 f6 f7 f8 | s1 s2 | b1 b2 b3 b4 b5 # ' +
  'dLine dXline dPline dPoly dRect dArc dCirc dCloud dSpl dEll dEllA dCaps dIns dMk dDots dHat dReg dTab dTxt dOrd').split(' ')
const side = Array.from({ length: 12 }, (_, i) => `q${i + 1}`)

const step = 97.95
const gridX = Array.from({ length: 21 }, (_, i) => ({ at: Math.round(130.3 + (i - 1) * step), major: (i + 4) % 5 === 0 }))
const gridY = Array.from({ length: 12 }, (_, i) => ({ at: Math.round(161.3 + (i - 1) * 97.9), major: (i + 4) % 5 === 0 }))
const dashes = [{ a: 68, b: 128 }, ...Array.from({ length: 11 }, (_, i) => ({ a: 155.6 + i * 93.24, b: 221.4 + i * 93.24 }))]
const redDots = [71.4, ...Array.from({ length: 35 }, (_, i) => 114.8 + i * 29.37)]

const history = [...Array(6).fill('Polecenie: *Anuluj*'), 'Polecenie:', 'Określ przeciwległy róg lub [graNica/WIelobok/PWielobok]:']

interface Row { k: string; v: string; mark?: string }
const sections: { title: string; dim?: boolean; rows: Row[] }[] = [
  {
    title: 'Ogólne',
    rows: [
      { k: 'Kolor', v: 'JakWarstwa', mark: 'color' }, { k: 'Warstwa', v: 'RED' }, { k: 'Typ linii', v: 'JakWarstwa', mark: 'dots' },
      { k: 'Skala typu linii', v: '1' }, { k: 'Szerokość linii', v: 'JakWarstwa', mark: 'weight' },
      { k: 'Przeźroczystość', v: 'JakWarstwa' }, { k: 'Grubość', v: '0' },
    ],
  },
  {
    title: 'Widok', dim: true,
    rows: [{ k: 'Centrum X', v: '539.717' }, { k: 'Centrum Y', v: '357.956' }, { k: 'Centrum Z', v: '0' }, { k: 'Wysokość', v: '117.0227' }, { k: 'Szerokość', v: '230.9777' }],
  },
  {
    title: 'Różne',
    rows: [{ k: 'Skala opisowa', v: '1:1' }, { k: 'Symbol LUW włączony', v: 'Tak' }, { k: 'Symbol LUW w początku', v: 'Tak' }, { k: 'LUW dla rzutni', v: 'Tak' }, { k: 'Nazwa LUW', v: '' }, { k: 'Styl wizualny', v: '2D Druty' }],
  },
]

const toggles = Array.from({ length: 16 }, (_, i) => ({ i: `t${i + 1}`, on: [2, 4, 5, 7, 8, 9, 10, 12, 14].includes(i + 1) }))
const extras = ['t18', 't19', 't20', 't21', 't22', 't23', 't24']
</script>

<template>
  <div class="app">
    <nav class="tabs">
      <a v-for="(x, i) in tabs" :key="x" href="#" class="tab" :class="{ active: i === 0 }">{{ x }}</a>
      <button class="collapse" aria-label="Zwiń wstążkę"><span class="up"><svg width="6" height="4"><path d="M0 4 L3 0 L6 4 Z" fill="#30353f" /></svg></span><Icon n="down" :w="7" :h="4" /></button>
    </nav>

    <header class="ribbon">
      <section v-for="g in panels" :key="g.title" class="panel" :style="{ width: g.w + 'px' }">
        <div class="body" :style="{ paddingLeft: g.pad + 'px' }">
          <template v-for="(b, bi) in g.blocks" :key="bi">
            <button v-if="b.kind === 'big'" class="big" :class="{ side: b.side }" :style="{ width: b.w + 'px' }">
              <Icon :n="b.i!" :w="32" />
              <span class="cap"><span v-for="l in b.lines" :key="l">{{ l }}</span></span>
              <Icon v-if="b.drop" class="drop" n="down" :w="7" :h="4" />
              <Icon v-if="b.side" class="sidedrop" n="down" :w="7" :h="4" />
            </button>
            <div v-else-if="b.kind === 'col'" class="col" :style="{ width: b.w + 'px' }">
              <button v-for="it in b.items" :key="it.i" class="small" :aria-label="it.label ?? it.i">
                <Icon :n="it.i" :w="16" /><span v-if="it.label">{{ it.label }}</span>
                <Icon v-if="it.drop" class="smalldrop" n="down" :w="7" :h="4" />
              </button>
            </div>
            <div v-else-if="b.kind === 'layers'" class="layers">
              <div v-for="row in layerRows" :key="row.label" class="lrow">
                <button v-for="n in row.ic" :key="n" class="lbtn" :aria-label="n"><Icon :n="n" :w="16" /></button>
                <span>{{ row.label }}</span>
              </div>
              <div class="combo layercombo">
                <Icon n="bulbY" :w="16" /><Icon n="sunY" :w="16" /><Icon n="unlock" :w="16" /><i class="sw dark" />
                <select aria-label="Warstwa"><option>RED</option></select>
                <Icon n="down" :w="7" :h="4" />
              </div>
            </div>
            <div v-else class="styles">
              <div v-for="s in styleCombos" :key="s.name" class="srow">
                <Icon :n="s.i" :w="16" />
                <div class="combo">
                  <i v-if="s.kind === 'color'" class="sw" />
                  <i v-else-if="s.kind === 'weight'" class="bar" />
                  <span v-else class="dotline"><i v-for="d in 5" :key="d" /></span>
                  <select :aria-label="s.name"><option>JakWarstwa</option></select>
                  <Icon n="down" :w="7" :h="4" />
                </div>
              </div>
            </div>
          </template>
        </div>
        <h2 class="ptitle">
          {{ g.title }}<Icon v-if="g.arrow" n="down" :w="7" :h="4" /><Icon v-if="g.corner" class="corner" n="corner" :w="4" />
        </h2>
      </section>
    </header>

    <div class="docs">
      <button class="burger" aria-label="Menu"><Icon n="menu" :w="16" :h="14" /></button>
      <a href="#" class="doc">Rysunek1*<Icon n="close" :w="9" /></a>
      <button class="add" aria-label="Nowy rysunek"><Icon n="plus" :w="12" /></button>
      <Icon n="slash" :w="8" :h="18" />
    </div>

    <div class="tools">
      <i class="grip first" />
      <template v-for="(n, i) in tools" :key="i">
        <i v-if="n === '|'" class="sep" />
        <i v-else-if="n === '#'" class="grip" />
        <button v-else class="tool" :aria-label="n"><Icon :n="n" :w="24" /></button>
      </template>
    </div>

    <main class="work">
      <div class="canvas">
        <svg class="drawing" width="100%" height="100%" aria-hidden="true">
          <g shape-rendering="crispEdges">
            <rect v-for="g in gridX" :key="'x' + g.at" :x="g.at" y="0" width="1" height="100%" :fill="g.major ? '#2f3a42' : '#242e36'" />
            <rect v-for="g in gridY" :key="'y' + g.at" x="0" :y="g.at" width="100%" height="1" :fill="g.major ? '#2f3a42' : '#242e36'" />
            <rect x="456" y="81" width="1" height="1053" fill="#d4d6d8" />
            <rect x="457" y="81" width="1" height="1053" fill="#777e84" />
          </g>
          <line v-for="d in dashes" :key="d.a" x1="1038" x2="1038" :y1="d.a" :y2="d.b" stroke="#0a80f5" stroke-width="4" />
          <circle v-for="y in redDots" :key="y" cx="1606" :cy="y" r="3.500" fill="#f50505" />
          <g fill="none" stroke="#fff" shape-rendering="crispEdges">
            <path d="M1357 728.500 H1485 M1421.500 664 V793" />
            <rect x="1416.500" y="723.500" width="10" height="10" />
          </g>
        </svg>

        <span class="viewlabel">[−] [Góra] [2D druty] [GUW]</span>
        <div class="winbtns">
          <button aria-label="Minimalizuj"><Icon n="vmin" :w="12" /></button>
          <button aria-label="Przywróć"><Icon n="vmax" :w="12" /></button>
          <button aria-label="Zamknij"><Icon n="vclose" :w="12" /></button>
        </div>

        <div class="compass">
          <svg width="120" height="120" aria-hidden="true">
            <g fill="none" stroke="#3b4852" stroke-width="13">
              <path d="M73 8 A54 54 0 0 1 112 47 M112 73 A54 54 0 0 1 73 112 M47 112 A54 54 0 0 1 8 73 M8 47 A54 54 0 0 1 47 8" />
            </g>
          </svg>
          <b class="n">N</b><b class="e">E</b><b class="s">S</b><b class="w">W</b>
          <button class="cube"><span>TOP</span></button>
        </div>

        <div class="sidebar">
          <i class="handle" />
          <div class="sidebox"><button v-for="n in side" :key="n" :aria-label="n"><Icon :n="n" :w="24" /></button></div>
        </div>

        <svg class="ucs" width="200" height="200" fill="none" stroke="#e6e8ea" aria-hidden="true">
          <path d="M21.500 156.500 H41.500 V176.500 H21.500 Z M31.500 156 V52 M23 75 L31.500 52 L40 75 M42 166.500 H146 M123 158 L146 166.500 L123 175" />
          <text x="22" y="35" class="axis">Y</text>
          <text x="165" y="178" class="axis">X</text>
        </svg>

        <div class="console">
          <div class="cside"><Icon n="gear" :w="16" /></div>
          <div class="cmain">
            <div class="log"><div v-for="(l, i) in history" :key="i">{{ l }}</div></div>
            <label class="entry"><Icon n="cmd" :w="15" /><i class="caret" /><input type="text" aria-label="Wiersz poleceń" /></label>
          </div>
        </div>
      </div>

      <aside class="props">
        <div class="phead">Właściwości<span class="grow" /><button aria-label="Autoukrywanie"><Icon n="pin" :w="16" /></button><button aria-label="Zamknij"><Icon n="x" :w="16" /></button></div>
        <div class="pick">
          <div class="picksel"><select aria-label="Wybór"><option>Brak wyboru</option></select><Icon n="wide" :w="10" :h="5" /></div>
          <button aria-label="Dodaj"><Icon n="pk1" :w="16" /></button><button aria-label="Wybierz"><Icon n="pk2" :w="16" /></button><button aria-label="Szybki wybór"><Icon n="pk3" :w="16" /></button>
        </div>
        <section v-for="s in sections" :key="s.title" class="sect">
          <h3>{{ s.title }}<Icon n="wide" :w="10" :h="5" /></h3>
          <table>
            <tbody>
              <tr v-for="q in s.rows" :key="q.k">
                <th scope="row">{{ q.k }}</th>
                <td :class="{ dim: s.dim }">
                  <div class="val">
                    <i v-if="q.mark === 'color'" class="psw" />
                    <span v-if="q.mark === 'dots'" class="dotline short"><i v-for="d in 5" :key="d" /></span>
                    <i v-if="q.mark === 'weight'" class="pbar" />{{ q.v }}
                  </div>
                </td>
              </tr>
            </tbody>
          </table>
        </section>
      </aside>
    </main>

    <footer class="status">
      <button class="burger wide" aria-label="Arkusze"><svg width="21" height="15"><path d="M0 1.500 H21 M0 7.500 H21 M0 13.500 H21" stroke="#e0e2e5" stroke-width="3" /></svg></button>
      <a href="#" class="sheet on">Model</a>
      <a href="#" class="sheet">Arkusz1</a><Icon n="slash" :w="8" :h="18" />
      <a href="#" class="sheet">Arkusz2</a><Icon n="slash" :w="8" :h="18" />
      <button class="sadd" aria-label="Nowy arkusz"><svg width="14" height="14"><path d="M7 0 V14 M0 7 H14" stroke="#e0e2e5" stroke-width="2" /></svg></button><Icon n="slash" :w="8" :h="18" />
      <span class="grow" />
      <span class="mono">581.3795, 342.0262, 0.0000</span>
      <div class="cells">
        <button v-for="x in toggles" :key="x.i" class="cell" :class="{ on: x.on }" :aria-label="x.i"><Icon :n="x.i" :w="24" /></button>
        <button class="unit mono">Milimetry<Icon n="tall" :w="10" :h="8" /></button>
        <button class="cell" aria-label="Skala"><Icon n="t17" :w="24" /></button>
        <button class="unit mono">1:1<Icon n="tall" :w="10" :h="8" /></button>
        <button v-for="n in extras" :key="n" class="cell" :aria-label="n"><Icon :n="n" :w="24" /></button>
      </div>
    </footer>
  </div>
</template>

<style>
html, body { margin: 0; background: #30353f; }
</style>

<style scoped>
.app { display: flex; flex-direction: column; height: 100vh; overflow: hidden; background: #30353f; color: #eceef1; font: 12px/15px Lato, "Noto Sans", sans-serif; }
button { border: 0; padding: 0; margin: 0; background: none; color: inherit; font: inherit; cursor: pointer; }
a { color: inherit; text-decoration: none; }
i { font-style: normal; }
.grow { flex: 1; }

.tabs { display: flex; flex: none; gap: 3px; height: 13px; padding-left: 5px; overflow: hidden; white-space: nowrap; }
.tab { height: 17px; margin-top: -4px; padding: 0 8px; line-height: 16px; }
.tab.active { background: #46556a; color: #45bdf5; }
.collapse { display: flex; align-items: flex-start; gap: 4px; margin-left: 16px; padding-top: 1px; }
.collapse .up { display: flex; align-items: center; justify-content: center; width: 14px; height: 12px; margin-top: -2px; background: #fff; }

.ribbon { display: flex; flex: none; height: 100px; background: #46556a; overflow: hidden; }
.panel { position: relative; box-sizing: border-box; flex: none; padding-top: 5px; white-space: nowrap; }
.panel::after { content: ""; position: absolute; top: 0; right: 0; bottom: 2px; width: 1px; background: #2d353f; }
.panel:last-child::after { display: none; }
.body { display: flex; height: 72px; }
.big { position: relative; display: flex; flex: none; flex-direction: column; align-items: center; padding-top: 3px; }
.big.side { box-sizing: border-box; padding-right: 10px; }
.cap { display: flex; flex-direction: column; align-items: center; padding-top: 3px; }
.drop { margin-top: 2px; }
.sidedrop { position: absolute; right: 2px; top: 52px; }
.col { display: flex; flex: none; box-sizing: border-box; flex-direction: column; padding-left: 4px; }
.small { display: flex; align-items: center; gap: 5px; height: 24px; }
.smalldrop { margin-left: 3px; }
.lrow { display: flex; align-items: center; height: 24px; }
.lbtn { display: flex; justify-content: center; width: 24px; }
.combo { display: flex; align-items: center; box-sizing: border-box; width: 180px; height: 22px; padding: 0 4px 0 6px; border: 1px solid #262b31; background: #3a4149; }
.combo select { flex: 1; }
.layercombo { width: 208px; margin-top: 1px; padding-left: 3px; gap: 4px; }
select { min-width: 0; border: 0; padding: 0; margin: 0; appearance: none; background: transparent; color: inherit; font: inherit; outline: 0; }
.sw { box-sizing: border-box; flex: none; width: 16px; height: 16px; margin-right: 3px; background: #f00; border: 1px solid #fff; }
.sw.dark { width: 14px; height: 14px; margin-right: 1px; border-color: #000; }
.bar { flex: none; width: 64px; height: 7px; margin-right: 2px; background: #fff; }
.dotline { display: flex; flex: none; justify-content: space-between; width: 64px; margin-right: 2px; }
.dotline i { width: 1px; height: 1px; background: #fff; }
.dotline.short { width: 45px; margin-right: 4px; }
.srow { display: flex; align-items: center; height: 22px; margin-bottom: 2px; gap: 2px; padding-left: 4px; }
.ptitle { display: flex; align-items: center; justify-content: center; gap: 7px; height: 23px; margin: 0; font: inherit; }
.corner { margin-left: 2px; }
.panel:nth-child(6) .corner { position: absolute; right: 6px; }

.docs { display: flex; flex: none; align-items: center; height: 29px; }
.burger { margin-left: 16px; }
.doc { display: flex; align-items: center; box-sizing: border-box; height: 22px; margin-left: 18px; margin-top: -3px; padding: 0 12px 0 16px; gap: 10px; background: #4f6080; clip-path: polygon(10px 0, 100% 0, calc(100% - 10px) 100%, 0 100%); font-weight: 700; }
.add { margin: 0 12px 0 10px; }

.tools { display: flex; flex: none; align-items: center; align-self: flex-start; box-sizing: border-box; height: 35px; margin-bottom: 2px; padding-right: 4px; border-top: 1px solid #8e9baa; background: #444b59; }
.tool { display: flex; justify-content: center; width: 32px; margin-top: -2px; }
.grip { box-sizing: border-box; width: 6px; height: 33px; margin: 0 4px 0 2px; border: solid #8e9baa; border-width: 0 2px; }
.grip.first { width: 5px; margin: 0 2px 0 0; }
.sep { box-sizing: border-box; width: 3px; height: 27px; margin: 0 3px; border: solid #8e9baa; border-width: 0 1px; }

.work { display: flex; flex: 1; min-height: 0; }
.canvas { position: relative; flex: 1; min-width: 0; overflow: hidden; background: #1f2830; }
.drawing { position: absolute; inset: 0; }
.viewlabel { position: absolute; left: 4px; top: 4px; font: 11px/15px "Liberation Sans", sans-serif; }
.winbtns { position: absolute; right: 9px; top: 7px; display: flex; gap: 8px; }
.compass { position: absolute; right: 44px; top: 44px; width: 120px; height: 120px; }
.compass b { position: absolute; width: 24px; line-height: 24px; text-align: center; font-size: 20px; color: #78818a; }
.n { left: 48px; top: -4px; }
.s { left: 48px; top: 100px; }
.e { right: -4px; top: 48px; }
.w { left: -4px; top: 48px; }
.cube { position: absolute; left: 34px; top: 34px; display: flex; align-items: center; justify-content: center; width: 52px; height: 52px; border-radius: 7px; background: #b4b4b7; }
.cube span { width: 33px; background: #a8a8ab; color: #42474c; font: 700 11px/32px "Open Sans", sans-serif; }
.sidebar { position: absolute; left: 0; top: 38px; width: 33px; }
.handle { display: block; height: 16px; background: #262f38; border-radius: 0 3px 0 0; }
.sidebox { display: flex; flex-direction: column; gap: 9px; padding: 10px 0 9px 5px; background: #343c46; border-radius: 0 3px 3px 0; }
.ucs { position: absolute; left: 0; bottom: 1px; }
.axis { font: 300 31px Lato, sans-serif; fill: #e6e8ea; stroke: none; }

.console { position: absolute; left: 592px; right: 119px; bottom: 1px; display: flex; border-radius: 4px; overflow: hidden; }
.cside { box-sizing: border-box; width: 36px; padding: 4px 0 0 13px; background: rgba(51, 55, 66, .95); }
.cmain { flex: 1; min-width: 0; background: rgba(57, 65, 73, .72); }
.log { padding: 6px 0 7px 4px; color: #0fc455; font: 20px/24px "Liberation Mono", monospace; white-space: pre; }
.entry { display: flex; align-items: center; height: 29px; padding-left: 5px; background: rgba(92, 96, 105, .4); }
.caret { width: 1px; height: 24px; margin-left: 6px; background: #9ea2a7; }
.entry input { flex: 1; border: 0; padding: 0 0 0 4px; background: none; color: #0fc455; font: 20px/24px "Liberation Mono", monospace; outline: 0; }

.props { flex: none; box-sizing: border-box; width: 528px; margin: 4px 0 3px 6px; background: #434c56; }
.phead { display: flex; align-items: center; height: 21px; padding: 0 1px 0 18px; gap: 2px; background: #525b67; }
.pick { display: flex; align-items: center; gap: 9px; padding: 6px 6px 4px; }
.pick button { flex: none; }
.picksel { display: flex; flex: 1; align-items: center; box-sizing: border-box; height: 24px; margin-right: -4px; padding: 0 3px 1px 2px; border: 1px solid #545f69; }
.picksel select { flex: 1; }
.sect { margin: 0 14px 5px 6px; }
.sect h3 { display: flex; align-items: center; justify-content: space-between; box-sizing: border-box; height: 25px; margin: 0; padding: 0 5px 0 4px; border: 1px solid #545f69; background: #3a3e45; font-size: 12px; }
.sect table { width: calc(100% - 15px); margin: -1px 0 0 15px; border-collapse: collapse; table-layout: fixed; }
.sect th, .sect td { box-sizing: border-box; height: 25px; padding: 0 3px; border: 1px solid #545f69; font-weight: 400; text-align: left; }
.sect th { width: 42%; padding: 3px 4px 0; }
.val { display: flex; align-items: center; }
.dim { color: #949ba3; }
.psw { box-sizing: border-box; width: 10px; height: 10px; margin-right: 3px; background: #f00; border: 1px solid #111; }
.pbar { width: 45px; height: 4px; margin-right: 4px; background: #e8eaed; }

.status { display: flex; flex: none; align-items: center; box-sizing: border-box; height: 36px; border-bottom: 2px solid #24262d; white-space: nowrap; }
.burger.wide { margin-left: 21px; }
.sheet { width: 78px; text-align: center; }
.sheet.on { width: 89px; margin-left: 24px; line-height: 30px; background: #4f6080; clip-path: polygon(10px 0, 100% 0, calc(100% - 10px) 100%, 0 100%); font-weight: 700; }
.sadd { margin: 0 18px 0 8px; }
.mono { color: #a3a5ab; font: 10px/14px "Liberation Mono", monospace; }
.cells { display: flex; align-items: center; gap: 3px; padding-left: 6px; }
.cell { display: flex; align-items: center; justify-content: center; box-sizing: border-box; width: 27px; height: 29px; }
.cell.on { border: 1px solid #5db4f8; background: #51708d; }
.unit { display: flex; align-items: center; gap: 4px; padding-right: 3px; }
.cell:last-child { width: 24px; }
</style>
